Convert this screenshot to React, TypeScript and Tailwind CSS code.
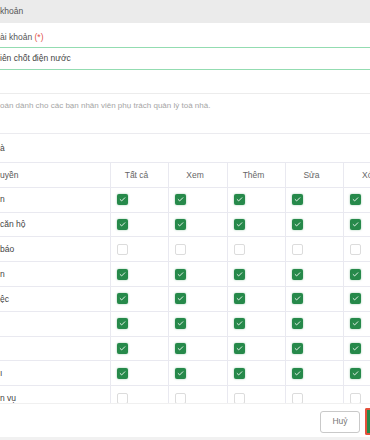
import { Check } from "lucide-react"

const columns = ["Tất cả", "Xem", "Thêm", "Sửa", "Xó"]

const rows = [
  { label: "n", on: true },
  { label: "căn hộ", on: true },
  { label: "báo", on: false },
  { label: "n", on: true },
  { label: "ệc", on: true },
  { label: "", on: true },
  { label: "", on: true },
  { label: "ı", on: true },
  { label: "n vụ", on: false },
]

function Box({ on }: { on: boolean }) {
  return on ? (
    <span className="flex h-[11px] w-[11px] items-center justify-center rounded-[2px] bg-[#26894a] shadow-[0_0_2px_rgba(38,137,74,0.5)]">
      <Check className="h-[7px] w-[7px] text-white" strokeWidth={3} />
    </span>
  ) : (
    <span className="block h-[11px] w-[11px] rounded-[2px] border border-[#dcdcdc] bg-white" />
  )
}

export default function App() {
  return (
    <div
      className="flex h-[440px] w-[370px] flex-col overflow-hidden bg-white text-[#4a4a4a]"
      style={{ fontFamily: '"Liberation Sans", Arial, sans-serif' }}
    >
      <div className="flex h-[23px] shrink-0 items-center bg-[#ebebeb] text-[8.5px] text-[#555]">
        khoản
      </div>

      {/* modal body, scrolls */}
      <div className="h-[380px] shrink-0 overflow-hidden">
        <div className="pt-[9px] text-[8.5px] leading-[11px] text-[#555]">
          ài khoản <span className="text-[#e0504a]">(*)</span>
        </div>
        <div className="mt-[4px] flex h-[23px] items-center border-y border-[#93dcb1] text-[8.5px] text-[#444]">
          iên chốt điện nước
        </div>
        <div className="h-[24px] border-b border-[#ececec]" />
        <p className="mt-[7px] text-[8px] leading-[10px] text-[#a5a5a5]">
          oán dành cho các bạn nhân viên phụ trách quản lý toà nhà.
        </p>

        <div className="mt-[22px] flex h-[29px] items-center border-t border-[#ebebef] text-[8.5px] text-[#444]">
          à
        </div>

        <div className="text-[8.5px]">
          <div className="grid h-[24.8px] grid-cols-[110px_58px_59px_58px_58px_58px] border-t border-[#e9e9f0] text-[#666]">
            <div className="flex items-center text-[#555]">uyền</div>
            {columns.slice(0, 4).map((c) => (
              <div key={c} className="flex items-center justify-center border-l border-[#e9e9f0] pr-[6px]">
                {c}
              </div>
            ))}
            <div className="flex items-center border-l border-[#e9e9f0] pl-[18px]">Xó</div>
          </div>
          {rows.map((r, i) => (
            <div
              key={i}
              className="grid h-[24.8px] grid-cols-[110px_58px_59px_58px_58px_58px] border-t border-[#e9e9f0]"
            >
              <div className="flex items-center text-[#444]">{r.label}</div>
              {columns.map((c) => (
                <div key={c} className="flex items-center border-l border-[#e9e9f0] pl-[6px]">
                  <Box on={r.on} />
                </div>
              ))}
            </div>
          ))}
        </div>
      </div>

      {/* footer */}
      <div className="flex h-[34px] shrink-0 items-center justify-end gap-[5px] border-t border-[#f0f0f0] bg-white pt-[2px]">
        <button className="flex h-[22px] w-[40px] items-center justify-center rounded-[3px] border border-[#c9c9c9] bg-white text-[8.5px] text-[#777]">
          Huỷ
        </button>
        <div className="h-[27px] w-[5px] shrink-0 rounded-l-[2px] border-y-2 border-l-2 border-[#e4513b] bg-[#26894a]" />
      </div>
      <div className="h-[3px] bg-[#f1f1f1]" />
    </div>
  )
}
